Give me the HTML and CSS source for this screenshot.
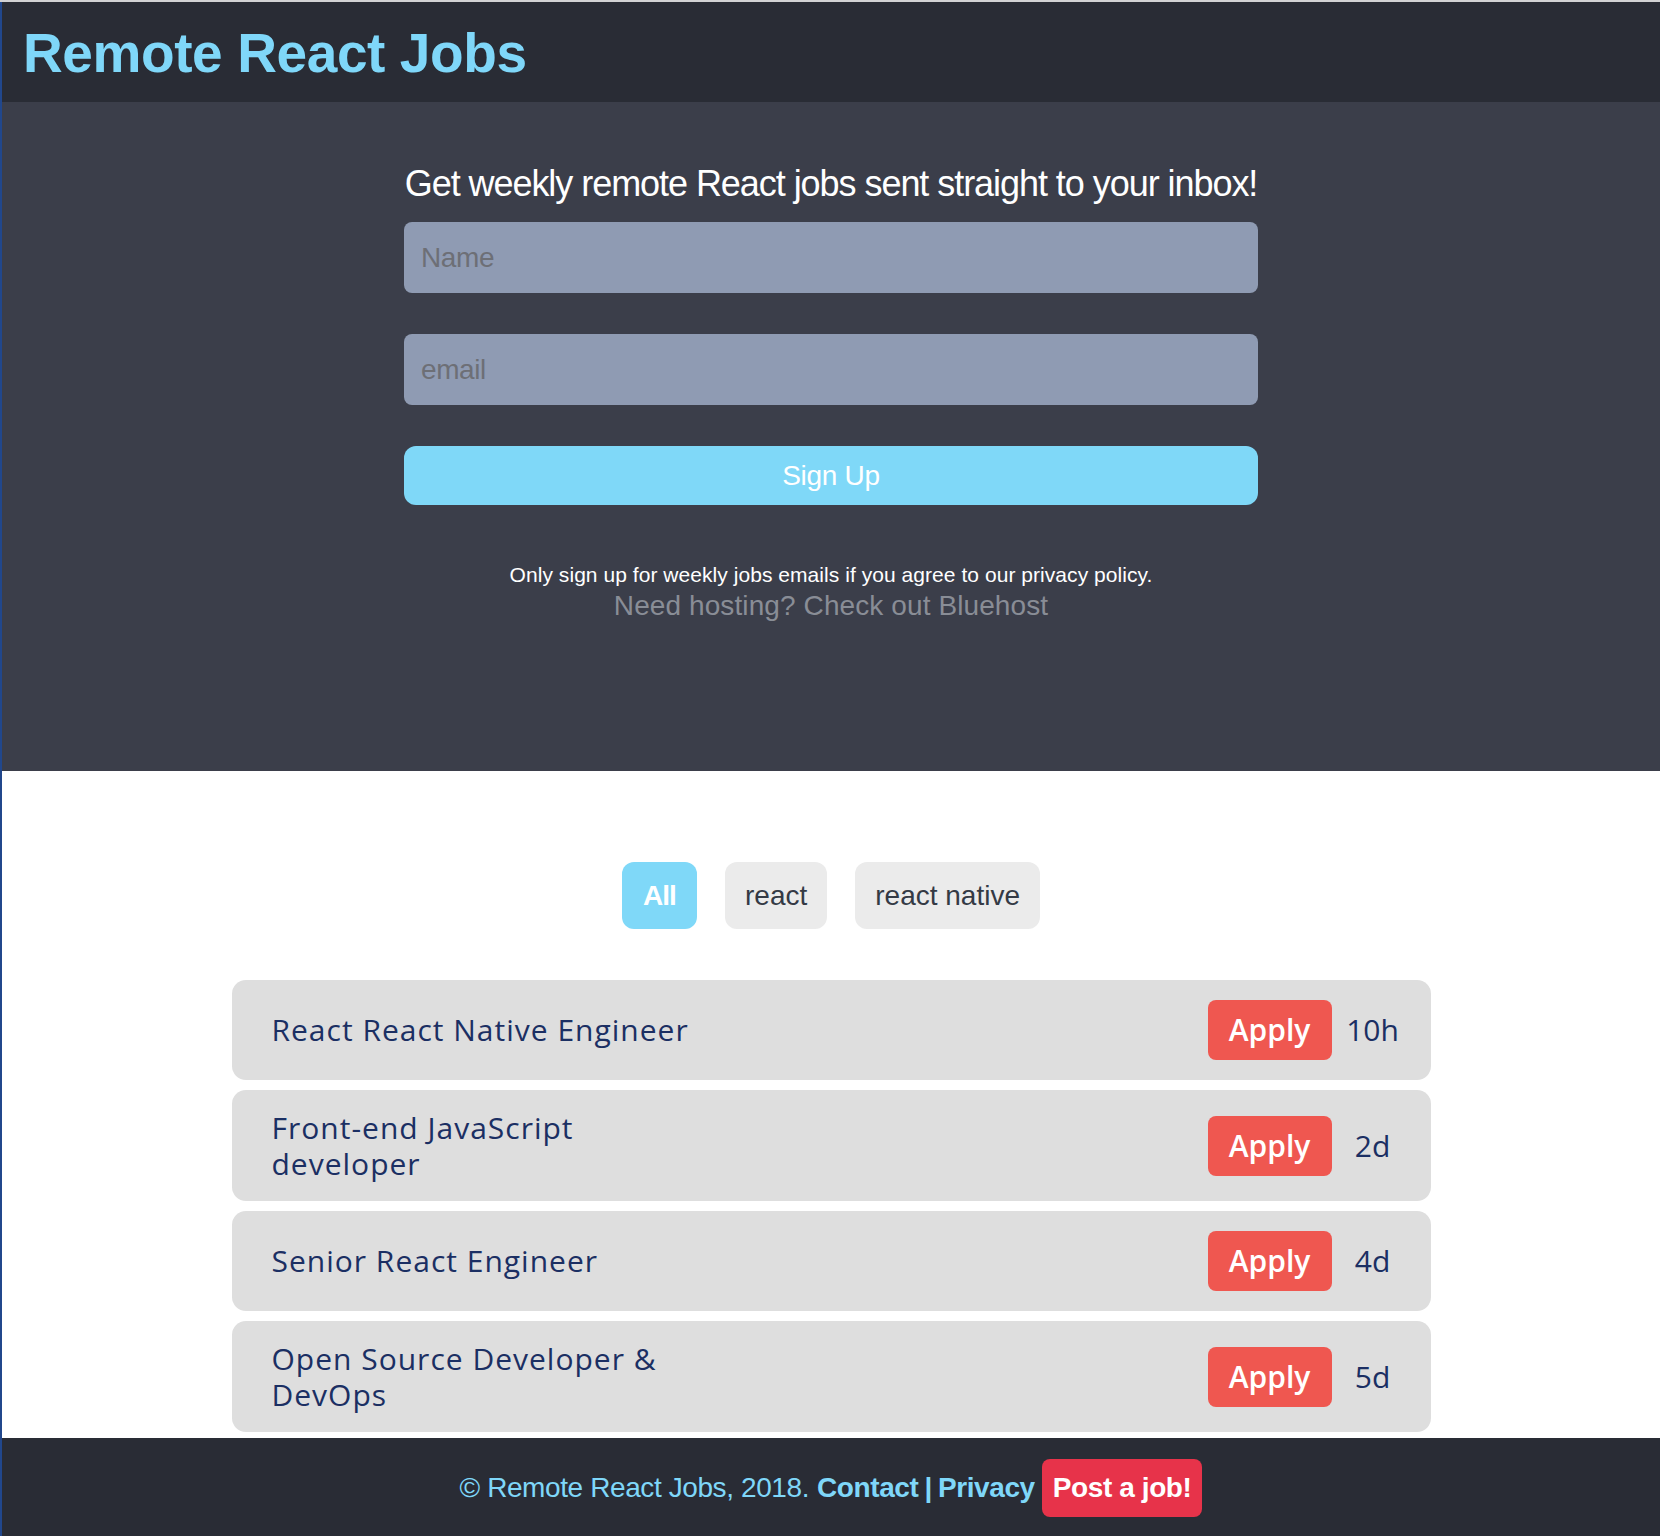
FILE: index.html
```html
<!DOCTYPE html>
<html lang="en">
<head>
<meta charset="utf-8">
<title>Remote React Jobs</title>
<link rel="stylesheet" href="styles.css">
</head>
<body>
<div class="page">
  <header class="topbar">
    <h1 class="brand">Remote React Jobs</h1>
  </header>

  <section class="hero">
    <form class="signup">
      <h2 class="signup-title">Get weekly remote React jobs sent straight to your inbox!</h2>
      <input class="field" type="text" placeholder="Name">
      <input class="field" type="email" placeholder="email">
      <button class="signup-btn" type="button">Sign Up</button>
    </form>
    <p class="notice">Only sign up for weekly jobs emails if you agree to our privacy policy.</p>
    <a class="hosting" href="#">Need hosting? Check out Bluehost</a>
  </section>

  <main class="jobs">
    <div class="filters">
      <button class="filter active" type="button">All</button>
      <button class="filter" type="button">react</button>
      <button class="filter" type="button">react native</button>
    </div>

    <ul class="job-list">
      <li class="job">
        <span class="job-title">React React Native Engineer</span>
        <a class="apply" href="#">Apply</a>
        <span class="age">10h</span>
      </li>
      <li class="job">
        <span class="job-title">Front-end JavaScript developer</span>
        <a class="apply" href="#">Apply</a>
        <span class="age">2d</span>
      </li>
      <li class="job">
        <span class="job-title">Senior React Engineer</span>
        <a class="apply" href="#">Apply</a>
        <span class="age">4d</span>
      </li>
      <li class="job">
        <span class="job-title">Open Source Developer &amp; DevOps</span>
        <a class="apply" href="#">Apply</a>
        <span class="age">5d</span>
      </li>
    </ul>
  </main>

  <footer class="footer">
    <span class="copy">© Remote React Jobs, 2018.</span>
    <a class="foot-link" href="#">Contact</a>
    <span class="sep">|</span>
    <a class="foot-link" href="#">Privacy</a>
    <a class="post-job" href="#">Post a job!</a>
  </footer>
</div>
</body>
</html>
```

FILE: styles.css
```css
html {
  background: #21478c;
}

body {
  margin: 0;
  border-top: 2px solid #d2d2d4;
  padding-left: 2px;
  font-family: "Liberation Sans", Arial, sans-serif;
}

.page {
  background: #ffffff;
}

.topbar {
  background: #292c35;
  height: 100px;
  display: flex;
  align-items: center;
  padding-left: 21px;
}

.brand {
  margin: 0;
  font-family: "Liberation Sans", Arial, sans-serif;
  font-weight: 700;
  font-size: 55px;
  letter-spacing: -0.4px;
  color: #7fd7f9;
  line-height: 1;
  padding-top: 2px;
}

.hero {
  background: #3b3e4a;
  padding: 60px 0 148px;
  display: flex;
  flex-direction: column;
  align-items: center;
}

.signup {
  width: 854px;
  display: flex;
  flex-direction: column;
}

.signup-title {
  margin: 0 0 16px;
  font-weight: 400;
  font-size: 36px;
  line-height: 44px;
  letter-spacing: -1.05px;
  color: #ffffff;
  text-align: center;
  white-space: nowrap;
}

.field {
  height: 71px;
  margin: 0 0 41px;
  border: 0;
  border-radius: 8px;
  background: #8f9bb3;
  padding: 0 17px;
  font-family: "Liberation Sans", Arial, sans-serif;
  font-size: 28px;
  letter-spacing: -0.4px;
  color: #2d313a;
  outline: none;
}

.field::placeholder {
  color: #6d6f76;
}

.signup-btn {
  height: 59px;
  border: 0;
  border-radius: 12px;
  background: #7fd8f8;
  color: #ffffff;
  font-family: "Liberation Sans", Arial, sans-serif;
  font-size: 28px;
  letter-spacing: -0.3px;
  cursor: pointer;
}

.notice {
  margin: 56px 0 0;
  font-size: 21px;
  line-height: 28px;
  letter-spacing: 0.05px;
  color: #ffffff;
}

.hosting {
  display: block;
  font-size: 28px;
  line-height: 34px;
  letter-spacing: 0.1px;
  color: #898d96;
  text-decoration: none;
}

.jobs {
  padding: 91px 0 6px;
}

.filters {
  display: flex;
  justify-content: center;
  gap: 28px;
  margin-bottom: 51px;
}

.filter {
  height: 67px;
  padding: 0 20px;
  border: 0;
  border-radius: 12px;
  background: #ebebeb;
  color: #343a45;
  font-family: "Liberation Sans", Arial, sans-serif;
  font-size: 28px;
  cursor: pointer;
}

.filter.active {
  background: #7fd8f8;
  color: #ffffff;
  font-weight: 700;
  letter-spacing: -1px;
  width: 75px;
  padding: 0;
}

.job-list {
  list-style: none;
  margin: 0 auto;
  padding: 0;
  width: 1199px;
  display: flex;
  flex-direction: column;
  gap: 10px;
}

.job {
  background: #dedede;
  border-radius: 14px;
  padding: 20px 27px 20px 40px;
  display: flex;
  align-items: center;
  color: #1b2f63;
  font-family: "Open Sans", sans-serif;
  font-size: 30px;
  line-height: 35.5px;
  letter-spacing: 1px;
}

.job-title {
  flex: 0 1 auto;
  max-width: 440px;
  margin-right: auto;
}

.apply {
  width: 124px;
  height: 60px;
  flex: none;
  display: flex;
  align-items: center;
  justify-content: center;
  background: #ef5750;
  border-radius: 8px;
  color: #ffffff;
  font-family: "Open Sans", sans-serif;
  font-weight: 600;
  font-size: 30px;
  letter-spacing: 0;
  text-decoration: none;
}

.age {
  width: 62px;
  margin-left: 10px;
  text-align: center;
  flex: none;
  letter-spacing: 0;
}

.footer {
  background: #292c35;
  height: 100px;
  display: flex;
  align-items: center;
  justify-content: center;
  color: #7fd7f9;
  font-size: 28px;
  letter-spacing: -0.4px;
}

.copy {
  margin-right: 8px;
}

.foot-link {
  color: #7fd7f9;
  font-weight: 700;
  text-decoration: none;
}

.sep {
  margin: 0 6px;
  font-weight: 700;
}

.post-job {
  margin-left: 7px;
  height: 58px;
  padding: 0 11px;
  display: flex;
  align-items: center;
  background: #e7334a;
  border-radius: 8px;
  color: #ffffff;
  font-weight: 700;
  text-decoration: none;
}
```
